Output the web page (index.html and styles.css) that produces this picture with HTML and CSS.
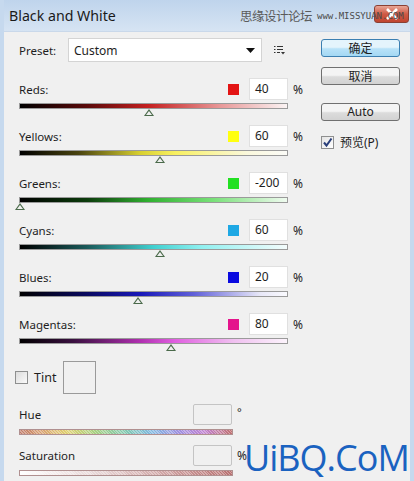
FILE: index.html
```html
<!DOCTYPE html>
<html lang="zh-CN">
<head>
    <meta charset="UTF-8">
    <title>Black and White</title>
    <link rel="stylesheet" href="styles.css">
</head>
<body>
<div class="window">
    <div class="titlebar">
        <span class="title">Black and White</span>
        <span class="mark">思缘设计论坛</span>
        <div class="close">
            <svg width="14" height="12" viewBox="0 0 14 12"><path d="M2 1 L12 11 M12 1 L2 11" stroke="#fff" stroke-width="2.6"/></svg>
        </div>
        <span class="mark-url">www.MISSYUAN.COM</span>
    </div>

    <div class="panel">
        <div class="left">
            <div class="preset-row">
                <span class="lbl preset-lbl">Preset:</span>
                <div class="select">
                    <span>Custom</span>
                    <svg width="9" height="5" viewBox="0 0 9 5"><path d="M0 0 H9 L4.5 5 Z" fill="#111"/></svg>
                </div>
                <svg class="menu-icon" width="11" height="10" viewBox="0 0 11 10">
                    <path d="M0 1.5 H1.5 M3 1.5 H9 M0 4.5 H1.5 M3 4.5 H9 M0 7.5 H1.5 M3 7.5 H6" stroke="#333" stroke-width="1"/>
                    <path d="M7 7 H11 L9 9.5 Z" fill="#333"/>
                </svg>
            </div>

            <div class="slider">
                <div class="head">
                    <span class="lbl">Reds:</span>
                    <span class="swatch red"></span>
                    <div class="num">40</div>
                    <span class="unit">%</span>
                </div>
                <div class="bar reds"><span class="thumb" style="left: 129px"></span></div>
            </div>

            <div class="slider">
                <div class="head">
                    <span class="lbl">Yellows:</span>
                    <span class="swatch yellow"></span>
                    <div class="num">60</div>
                    <span class="unit">%</span>
                </div>
                <div class="bar yellows"><span class="thumb" style="left: 140px"></span></div>
            </div>

            <div class="slider">
                <div class="head">
                    <span class="lbl">Greens:</span>
                    <span class="swatch green"></span>
                    <div class="num">-200</div>
                    <span class="unit">%</span>
                </div>
                <div class="bar greens"><span class="thumb" style="left: 0px"></span></div>
            </div>

            <div class="slider">
                <div class="head">
                    <span class="lbl">Cyans:</span>
                    <span class="swatch cyan"></span>
                    <div class="num">60</div>
                    <span class="unit">%</span>
                </div>
                <div class="bar cyans"><span class="thumb" style="left: 140px"></span></div>
            </div>

            <div class="slider">
                <div class="head">
                    <span class="lbl">Blues:</span>
                    <span class="swatch blue"></span>
                    <div class="num">20</div>
                    <span class="unit">%</span>
                </div>
                <div class="bar blues"><span class="thumb" style="left: 118px"></span></div>
            </div>

            <div class="slider">
                <div class="head">
                    <span class="lbl">Magentas:</span>
                    <span class="swatch magenta"></span>
                    <div class="num">80</div>
                    <span class="unit">%</span>
                </div>
                <div class="bar magentas"><span class="thumb" style="left: 151px"></span></div>
            </div>

            <div class="tint-row">
                <span class="box"></span>
                <span class="lbl">Tint</span>
                <span class="tint-swatch"></span>
            </div>

            <div class="tint-slider">
                <div class="head">
                    <span class="lbl">Hue</span>
                    <div class="num empty"></div>
                    <span class="unit deg">°</span>
                </div>
                <div class="tbar hue"></div>
            </div>

            <div class="tint-slider">
                <div class="head">
                    <span class="lbl">Saturation</span>
                    <div class="num empty"></div>
                    <span class="unit">%</span>
                </div>
                <div class="tbar sat"></div>
            </div>
        </div>

        <div class="right">
            <button class="btn primary">确定</button>
            <button class="btn">取消</button>
            <button class="btn auto">Auto</button>
            <div class="preview">
                <span class="box checked">
                    <svg width="11" height="11" viewBox="0 0 11 11"><path d="M2 5.5 L4.5 8.5 L9.5 1.5" fill="none" stroke="#2a3f7a" stroke-width="2"/></svg>
                </span>
                <span class="preview-lbl">预览(P)</span>
            </div>
        </div>
    </div>

    <div class="watermark">UiBQ.CoM</div>
</div>
</body>
</html>
```

FILE: styles.css
```css
body {
    margin: 0;
    font-family: "Noto Sans", "Noto Sans CJK SC", sans-serif;
    color: #1e1e1e;
}

.window {
    position: relative;
    width: 414px;
    height: 481px;
    box-sizing: border-box;
    background-color: #f0f0f0;
    border-left: 4px solid #c6d9ee;
    border-right: 4px solid #c6d9ee;
    overflow: hidden;
}

.titlebar {
    position: relative;
    height: 32px;
    margin: 0 -4px;
    padding: 0 0 0 9px;
    display: flex;
    align-items: center;
    background: linear-gradient(#bfd4ec, #d6e4f3);
    border-bottom: 1px solid #c9d8ea;
    box-sizing: border-box;
}

.title {
    font-family: "Noto Sans", sans-serif;
    font-size: 14.2px;
    color: #1a1a1a;
    width: 231px;
    flex-shrink: 0;
}

.mark {
    font-size: 12.5px;
    color: #5a5a5a;
    letter-spacing: -0.5px;
    flex-shrink: 0;
}

.mark-url {
    position: relative;
    margin-left: 5px;
    flex-shrink: 0;
    font-family: "DejaVu Sans Mono", monospace;
    font-size: 9px;
    color: #4a4a4a;
    white-space: nowrap;
}

.close {
    position: absolute;
    right: 5px;
    top: 5px;
    width: 35px;
    height: 18px;
    border: 1px solid #8a4034;
    border-radius: 3px;
    background: linear-gradient(#e8a596, #cf5a45 50%, #c04530);
    display: flex;
    justify-content: center;
    align-items: center;
    box-sizing: border-box;
}

.panel {
    display: flex;
    padding: 6px 0 0 15px;
}

.left {
    width: 302px;
}

.lbl {
    font-size: 11.5px;
}

.preset-row {
    display: flex;
    align-items: center;
    height: 24px;
}

.preset-lbl {
    width: 49px;
}

.select {
    width: 194px;
    height: 24px;
    box-sizing: border-box;
    background: #fff;
    border: 1px solid #d4d4d4;
    display: flex;
    align-items: center;
    justify-content: space-between;
    padding: 0 6px 0 5px;
    font-size: 12px;
}

.menu-icon {
    margin-left: 12px;
}

.slider {
    width: 289px;
    height: 47px;
}

.preset-row + .slider {
    margin-top: 16px;
}

.head {
    display: flex;
    align-items: center;
    height: 22px;
}

.head .lbl {
    flex: 1;
}

.swatch {
    width: 11px;
    height: 11px;
    margin-right: 10px;
}

.red { background: #e31414; }
.yellow { background: #ffff10; }
.green { background: #22e022; }
.cyan { background: #1ea8e4; }
.blue { background: #0a0ae0; }
.magenta { background: #e4148c; }

.num {
    width: 39px;
    height: 22px;
    box-sizing: border-box;
    background: #fff;
    border: 1px solid #e0e0e0;
    font-size: 12px;
    line-height: 20px;
    padding-left: 5px;
}

.num.empty {
    border: 1px solid #c4c4c4;
    border-radius: 2px;
    background: #f0f0f0;
    height: 21px;
}

.unit {
    width: 15px;
    padding-left: 5px;
    font-size: 12px;
}

.bar {
    position: relative;
    width: 269px;
    height: 6px;
    margin-top: 3px;
    box-sizing: border-box;
    border: 1px solid #9a9a9a;
}

.reds { background: linear-gradient(90deg, #000, #5a0a0a 25%, #c42020 48%, #e89898 75%, #fbf4f4); }
.yellows { background: linear-gradient(90deg, #000, #4a4410 22%, #d8d030 45%, #f8f060 58%, #faf8dc 85%, #fcfcf8); }
.greens { background: linear-gradient(90deg, #000, #0c3c0c 25%, #30b030 48%, #78e078 72%, #f0fbf0); }
.cyans { background: linear-gradient(90deg, #000, #1a5a5a 25%, #40d0d0 50%, #90f0f0 68%, #f4fcfc); }
.blues { background: linear-gradient(90deg, #000, #0a0a60 25%, #1818b8 45%, #6060d8 65%, #e8e8f8 90%, #fafafe); }
.magentas { background: linear-gradient(90deg, #000, #3a1040 20%, #b030b0 45%, #e060e0 58%, #f0c0f0 80%, #fcf4fc); }

.thumb {
    position: absolute;
    top: 5px;
    margin-left: -5px;
    width: 0;
    height: 0;
    border-left: 5px solid transparent;
    border-right: 5px solid transparent;
    border-bottom: 7px solid #4a6a4a;
}

.thumb::after {
    content: "";
    position: absolute;
    left: -3px;
    top: 2px;
    border-left: 3px solid transparent;
    border-right: 3px solid transparent;
    border-bottom: 4px solid #f0f0f0;
}

.tint-row {
    display: flex;
    align-items: center;
    height: 33px;
    margin-top: 1px;
    margin-left: -4px;
}

.box {
    width: 13px;
    height: 13px;
    box-sizing: border-box;
    border: 1px solid #8e8f8f;
    background: linear-gradient(135deg, #dcdcdc, #fafafa);
}

.tint-row .lbl {
    font-size: 12.5px;
    margin-left: 6px;
    width: 29px;
}

.tint-swatch {
    width: 33px;
    height: 33px;
    box-sizing: border-box;
    border: 1px solid #9a9a9a;
}

.tint-slider {
    width: 233px;
    height: 41px;
    margin-top: 10px;
}

.tint-slider + .tint-slider {
    margin-top: 0;
}

.tint-slider .head {
    height: 21px;
}

.deg {
    align-self: flex-start;
    font-size: 11px;
    padding-top: 0;
}

.tbar {
    width: 214px;
    height: 6px;
    margin-top: 4px;
    box-sizing: border-box;
    border: 1px solid #b09090;
}

.hue {
    background:
        repeating-linear-gradient(45deg, rgba(255,255,255,0.35) 0 1px, transparent 1px 2px),
        linear-gradient(90deg, #c07a68, #d8a070 10%, #e0d070 22%, #a8d080 35%, #80c8b0 50%, #80b8e0 62%, #a090e0 75%, #c080d0 87%, #c07070);
}

.sat {
    background:
        repeating-linear-gradient(45deg, rgba(255,255,255,0.35) 0 1px, transparent 1px 2px),
        linear-gradient(90deg, #ffffff, #e8d8d8 35%, #b87070 100%);
}

.right {
    display: flex;
    flex-direction: column;
    padding-top: 1px;
}

.btn {
    width: 79px;
    height: 18px;
    padding: 0;
    margin-bottom: 10px;
    border: 1px solid #707070;
    border-radius: 3px;
    background: linear-gradient(#f4f4f4 45%, #dcdcdc 55%, #d2d2d2);
    font-family: "Noto Sans CJK SC", "Noto Sans", sans-serif;
    font-size: 12px;
    line-height: 16px;
    color: #1e1e1e;
}

.btn.primary {
    border-color: #3c7fb1;
    background: linear-gradient(#e4f4fc 45%, #b8e2f8 55%, #a4d8f4);
}

.btn.auto {
    margin-top: 8px;
    font-family: "Noto Sans", sans-serif;
}

.preview {
    display: flex;
    align-items: center;
    margin-top: 2px;
}

.box.checked {
    display: flex;
    align-items: center;
    justify-content: center;
    background: linear-gradient(135deg, #e4e4e4, #ffffff);
}

.preview-lbl {
    margin-left: 6px;
    font-size: 12px;
}

.watermark {
    position: absolute;
    left: 240px;
    top: 435px;
    font-family: "Open Sans", sans-serif;
    font-size: 36px;
    line-height: 46px;
    color: #1a62c0;
    letter-spacing: -1px;
}
```
